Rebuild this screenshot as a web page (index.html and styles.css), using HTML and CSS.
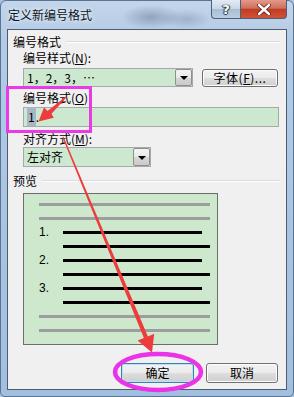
FILE: index.html
```html
<!DOCTYPE html>
<html lang="zh-CN">
<head>
    <meta charset="UTF-8">
    <title>定义新编号格式</title>
    <link rel="stylesheet" href="styles.css">
</head>
<body>
    <div class="window">
        <div class="titlebar">
            <span class="title">定义新编号格式</span>
            <div class="caption-buttons">
                <div class="cap-btn help">?</div>
                <div class="cap-btn close">
                    <svg width="14" height="11" viewBox="0 0 14 11">
                        <path d="M2 1 L12 10 M12 1 L2 10" stroke="#5a1a14" stroke-width="4" stroke-linecap="round"/>
                        <path d="M2 1 L12 10 M12 1 L2 10" stroke="#fff" stroke-width="2.4" stroke-linecap="round"/>
                    </svg>
                </div>
            </div>
        </div>

        <div class="client">
            <div class="group-head"><span>编号格式</span><i class="rule"></i></div>
            <div class="indent">
                <div class="label label-first">编号样式(<u>N</u>):</div>
                <div class="row">
                    <div class="combo style-combo">
                        <span class="combo-text">1，2，3，…</span>
                        <span class="drop"><i class="tri"></i></span>
                    </div>
                    <button class="btn font-btn">字体(<u>F</u>)...</button>
                </div>
                <div class="label label-format">编号格式(<u>O</u>)</div>
                <div class="field"><span class="sel">1</span>.</div>
                <div class="label label-align">对齐方式(<u>M</u>):</div>
                <div class="combo align-combo">
                    <span class="combo-text">左对齐</span>
                    <span class="drop"><i class="tri"></i></span>
                </div>
            </div>

            <div class="group-head preview-head"><span>预览</span><i class="rule"></i></div>
            <div class="preview">
                <div class="pline"><i class="bar gray"></i></div>
                <div class="pline"><i class="bar gray"></i></div>
                <div class="pline"><span class="num">1.</span><i class="bar black short"></i></div>
                <div class="pline"><span class="num"></span><i class="bar black long"></i></div>
                <div class="pline"><span class="num">2.</span><i class="bar black short"></i></div>
                <div class="pline"><span class="num"></span><i class="bar black long"></i></div>
                <div class="pline"><span class="num">3.</span><i class="bar black short"></i></div>
                <div class="pline"><span class="num"></span><i class="bar black long"></i></div>
                <div class="pline"><i class="bar gray"></i></div>
                <div class="pline"><i class="bar gray"></i></div>
            </div>

            <div class="buttons">
                <button class="btn dlg-btn default">确定</button>
                <button class="btn dlg-btn">取消</button>
            </div>
        </div>

        <!-- annotation marks drawn over the dialog -->
        <svg class="marks" width="294" height="397" viewBox="0 0 294 397">
            <rect x="7.5" y="87.5" width="83" height="44" fill="none" stroke="#e93ae6" stroke-width="3"/>
            <polygon fill="#ee3b3b" points="62.4,137.2 63.6,136.8 147.9,336.4 154.2,333.8 152,352.5 137.6,340.6 143.9,338"/>
            <polygon fill="#ee3b3b" points="65.6,96.6 66.4,97.4 51.5,113.8 53.8,117.8 38.5,121.5 44,107.5 47.6,111"/>
            <ellipse cx="158" cy="372" rx="43" ry="18" fill="none" stroke="#ea32e6" stroke-width="4.5"/>
        </svg>
    </div>
</body>
</html>
```

FILE: styles.css
```css
body {
    margin: 0;
    font-family: "Noto Sans CJK SC", "Liberation Sans", sans-serif;
    font-size: 12px;
    color: #000;
    background: #a9c4e2;
}
.window {
    position: relative;
    width: 294px;
    height: 397px;
    box-sizing: border-box;
    border: 1px solid #5a7594;
    border-radius: 6px 6px 5px 5px;
    display: flex;
    flex-direction: column;
    background:
        radial-gradient(ellipse 30px 12px at 150px 16px, rgba(90, 110, 135, 0.45), transparent),
        radial-gradient(ellipse 25px 10px at 185px 18px, rgba(90, 110, 135, 0.3), transparent),
        linear-gradient(to bottom, #c3d5e9 0%, #b3cbe6 10%, #a8c3e2 60%, #a3bfe0 100%);
}
.titlebar {
    height: 28px;
    display: flex;
    justify-content: space-between;
}
.title {
    padding: 6px 0 0 7px;
    line-height: 16px;
    color: #0c1420;
    text-shadow: 0 0 5px #e8f0f8, 0 0 3px #e8f0f8;
}
.caption-buttons {
    display: flex;
    height: 19px;
    margin: -1px 6px 0 0;
}
.cap-btn {
    box-sizing: border-box;
    height: 19px;
    display: flex;
    align-items: center;
    justify-content: center;
    border: 1px solid #4d5f74;
    border-top: none;
}
.help {
    width: 29px;
    border-right: none;
    border-radius: 0 0 0 4px;
    background: linear-gradient(to bottom, #e2ebf5 0%, #c9d7e7 48%, #a9bdd4 52%, #b9cde2 100%);
    color: #fff;
    font-family: "DejaVu Sans", sans-serif;
    font-weight: bold;
    font-size: 13px;
    text-shadow: 0 0 1px #2a3440, 1px 0 1px #2a3440, -1px 0 1px #2a3440, 0 1px 1px #2a3440;
}
.close {
    width: 47px;
    border-radius: 0 0 4px 0;
    background: linear-gradient(to bottom, #e29a8a 0%, #d0705c 45%, #bf3c26 52%, #d25236 100%);
}
.client {
    margin: 0 6px;
    height: 361px;
    box-sizing: border-box;
    border: 1px solid #4f5c6b;
    background: #f0f0f0;
}
.group-head {
    display: flex;
    align-items: center;
    height: 14px;
    line-height: 14px;
    margin: 5px 6px 0 5px;
}
.group-head .rule {
    flex: 1;
    height: 1px;
    margin-left: 5px;
    background: #d5dbe1;
    border-bottom: 1px solid #fff;
}
.indent {
    padding-left: 15px;
}
.label {
    height: 14px;
    line-height: 14px;
}
.label u {
    text-underline-offset: 1px;
}
.label-first {
    margin-top: 2px;
}
.row {
    display: flex;
    align-items: flex-start;
    margin-top: 3px;
}
.combo {
    box-sizing: border-box;
    display: flex;
    align-items: center;
    justify-content: space-between;
    border: 1px solid #a5a9ae;
    background: #cce8cf;
}
.style-combo {
    width: 170px;
    height: 19px;
}
.align-combo {
    width: 128px;
    height: 20px;
    margin-top: 1px;
}
.combo-text {
    padding-left: 3px;
    line-height: 16px;
}
.drop {
    box-sizing: border-box;
    width: 17px;
    height: 100%;
    display: flex;
    align-items: center;
    justify-content: center;
    border: 1px solid #8f8f8f;
    border-radius: 2px;
    background: linear-gradient(to bottom, #f5f5f5 0%, #e8e8e8 50%, #d6d6d6 51%, #cbcbcb 100%);
}
.tri {
    width: 0;
    height: 0;
    border-left: 4px solid transparent;
    border-right: 4px solid transparent;
    border-top: 4px solid #000;
    margin-top: 1px;
}
.btn {
    box-sizing: border-box;
    font-family: "Noto Sans CJK SC", "Liberation Sans", sans-serif;
    font-size: 12px;
    color: #000;
    padding: 0;
    border: 1px solid #707070;
    border-radius: 3px;
    background: linear-gradient(to bottom, #f2f2f2 0%, #ebebeb 48%, #dddddd 52%, #cfcfcf 100%);
    box-shadow: inset 0 0 0 1px #fcfcfc;
    line-height: 16px;
}
.font-btn {
    width: 76px;
    height: 18px;
    margin: 1px 0 0 9px;
    letter-spacing: 0.5px;
}
.label-format {
    margin-top: 4px;
}
.field {
    box-sizing: border-box;
    width: 256px;
    height: 20px;
    margin-top: 2px;
    padding-left: 3px;
    border: 1px solid #a5a9ae;
    background: #cce8cf;
    line-height: 18px;
}
.sel {
    background: #a9b7c4;
    padding: 1px;
}
.label-align {
    margin-top: 5px;
}
.preview-head {
    margin-top: 7px;
}
.preview {
    box-sizing: border-box;
    width: 195px;
    height: 152px;
    margin: 5px 0 0 15px;
    padding: 3px 0 0 15px;
    border: 1px solid #6d6d6d;
    background: #cde8cd;
}
.pline {
    height: 14px;
    display: flex;
    align-items: center;
}
.num {
    width: 24px;
    font-family: "Liberation Sans", sans-serif;
    font-size: 12px;
    line-height: 14px;
}
.bar {
    height: 3px;
}
.bar.gray {
    width: 171px;
    background: #9d9d9d;
}
.bar.black {
    background: #000;
}
.bar.short {
    width: 139px;
}
.bar.long {
    width: 147px;
}
.buttons {
    display: flex;
    justify-content: flex-end;
    gap: 12px;
    margin: 18px 8px 0 0;
}
.dlg-btn {
    height: 20px;
    width: 72px;
}
.dlg-btn.default {
    width: 73px;
    border-color: #3c7fb1;
    box-shadow: inset 0 0 0 1px #b9e1f7;
}
.marks {
    position: absolute;
    left: -1px;
    top: -1px;
    pointer-events: none;
}
```
